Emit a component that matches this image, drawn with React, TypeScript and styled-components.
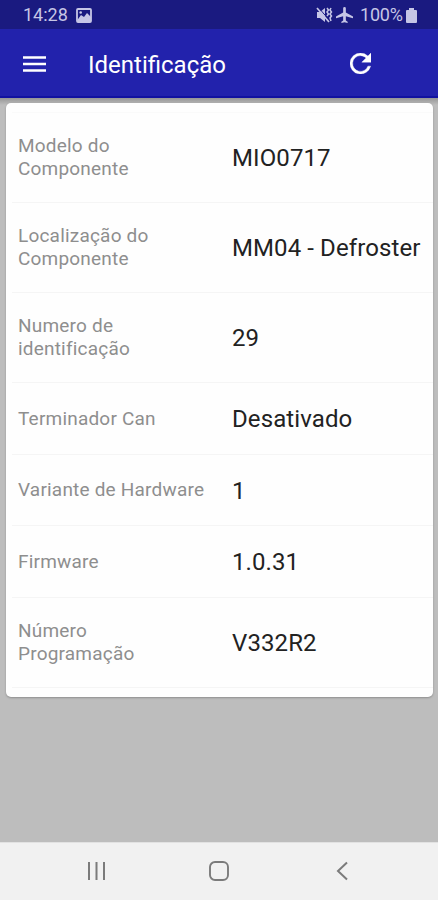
import React from 'react';
import styled, { createGlobalStyle } from 'styled-components';

const GlobalStyle = createGlobalStyle`
  * { box-sizing: border-box; }
  body { margin: 0; background: #bdbdbd; font-family: Roboto, sans-serif; }
`;

const Screen = styled.div`
  width: 100%;
  height: 900px;
  display: flex;
  flex-direction: column;
  overflow: hidden;
  background: #bdbdbd;
`;

const StatusBar = styled.header`
  height: 29px;
  flex: none;
  display: flex;
  align-items: center;
  justify-content: space-between;
  padding: 1px 21px 0 23px;
  background: #1a1a80;
  color: #c6c6e6;
  font-size: 18px;
  line-height: 20px;
`;

const StatusGroup = styled.div`
  display: flex;
  align-items: center;
`;

const Clock = styled.span`
  width: 53px;
`;

const MutedSlot = styled.span`
  display: flex;
  margin-right: 3px;
`;

const Percent = styled.span`
  width: 46px;
  margin-left: 7px;
  letter-spacing: -0.2px;
`;

const Toolbar = styled.div`
  height: 69px;
  flex: none;
  display: flex;
  align-items: center;
  padding: 2px 67px 0 23px;
  background: #2222ac;
  border-bottom: 2px solid #1212a0;
  color: #fff;
`;

const Title = styled.h1`
  flex: 1;
  margin: 2px 0 0 42px;
  font-size: 24px;
  font-weight: 400;
  line-height: 28px;
  letter-spacing: 0;
`;

const IconButton = styled.button`
  display: flex;
  padding: 0;
  border: 0;
  background: none;
  color: inherit;
`;

const Content = styled.main`
  flex: 1;
  padding: 5px 5px 0 6px;
  background: linear-gradient(#969696, #bdbdbd 7px);
`;

const Card = styled.section`
  height: 594px;
  padding: 9px 0 0 6px;
  border-radius: 5px;
  background: #fefefe;
  box-shadow: 0 1px 2px rgba(0, 0, 0, 0.25);
`;

const List = styled.dl`
  margin: 0;
  border-top: 1px solid #fafafa;
`;

const Row = styled.div<{ $height: number }>`
  height: ${({ $height }) => $height}px;
  display: grid;
  grid-template-columns: 214px 1fr;
  align-items: center;
  padding-left: 6px;
  border-bottom: 1px solid #f5f5f5;
`;

const Label = styled.dt`
  padding-bottom: 1px;
  color: #8e8e8e;
  font-size: 19px;
  line-height: 23px;
  white-space: pre-line;
  letter-spacing: 0.2px;
`;

const Value = styled.dd`
  margin: 0;
  padding-top: 1px;
  color: #222;
  font-size: 24px;
  line-height: 28px;
  letter-spacing: 0.1px;
  white-space: nowrap;
`;

const NavBar = styled.nav`
  height: 58px;
  flex: none;
  display: flex;
  align-items: center;
  justify-content: space-between;
  padding: 0 84px 2px 84px;
  background: #f1f1f1;
  border-top: 1px solid #e2e2e2;
  color: #7b7b7b;
`;

const rows = [
  { label: 'Modelo do\nComponente', value: 'MIO0717', height: 90 },
  { label: 'Localização do\nComponente', value: 'MM04 - Defroster', height: 90 },
  { label: 'Numero de\nidentificação', value: '29', height: 90 },
  { label: 'Terminador Can', value: 'Desativado', height: 72 },
  { label: 'Variante de Hardware', value: '1', height: 71 },
  { label: 'Firmware', value: '1.0.31', height: 72 },
  { label: 'Número\nProgramação', value: 'V332R2', height: 90 },
];

const PictureIcon = () => (
  <svg width="16" height="15" viewBox="0 0 16 15">
    <rect x="1" y="1" width="14" height="13" rx="1" fill="none" stroke="currentColor" strokeWidth="1.8" />
    <path d="M1 12.500 5 7l3 2 3-4 4 4v5H1Z" fill="currentColor" />
    <circle cx="4.700" cy="4.500" r="1.300" fill="currentColor" />
  </svg>
);

const MuteIcon = () => (
  <svg width="17" height="16" viewBox="0 0 17 16" fill="none" stroke="currentColor">
    <path d="M1 5h3l5-4v14l-5-4H1Z" fill="currentColor" stroke="none" />
    <path d="m2 0 12 14" stroke="#1a1a80" strokeWidth="1" />
    <path d="m1 1 12 14" strokeWidth="1.700" />
    <path d="m11 1 1.500 2L11 5l1.500 2L11 9M15 1l-1 2 1.500 2L14 7l1.500 2L14 11l1 3" strokeWidth="1.500" />
  </svg>
);

const PlaneIcon = () => (
  <svg width="17" height="16" viewBox="2 2 19 20" preserveAspectRatio="none">
    <path fill="currentColor" d="M21 16v-2l-8-5V3.500a1.500 1.500 0 0 0-3 0V9l-8 5v2l8-2.500V19l-2 1.500V22l3.500-1 3.500 1v-1.500L13 19v-5.500Z" />
  </svg>
);

const BatteryIcon = () => (
  <svg width="11" height="15" viewBox="0 0 11 15">
    <path fill="currentColor" d="M3 0h5v2h2a1 1 0 0 1 1 1v11a1 1 0 0 1-1 1H1a1 1 0 0 1-1-1V3a1 1 0 0 1 1-1h2Z" />
  </svg>
);

const MenuIcon = () => (
  <svg width="23" height="16" viewBox="0 0 23 16">
    <path d="M0 1.500h23M0 8h23M0 14.500h23" stroke="currentColor" strokeWidth="2.700" />
  </svg>
);

const RefreshIcon = () => (
  <svg width="21" height="21" viewBox="4 4 16 16">
    <path fill="currentColor" stroke="currentColor" strokeWidth=".3" d="M17.650 6.350A7.958 7.958 0 0 0 12 4a8 8 0 1 0 7.730 10h-2.080A6 6 0 1 1 12 6c1.660 0 3.140.690 4.220 1.780L13 11h7V4Z" />
  </svg>
);

const RecentsIcon = () => (
  <svg width="24" height="24" viewBox="0 0 24 24">
    <path d="M5 3v18M12.500 3v18M20 3v18" stroke="currentColor" strokeWidth="2" />
  </svg>
);

const HomeIcon = () => (
  <svg width="24" height="24" viewBox="0 0 24 24">
    <rect x="3" y="3" width="18" height="18" rx="5" fill="none" stroke="currentColor" strokeWidth="1.900" />
  </svg>
);

const BackIcon = () => (
  <svg width="24" height="24" viewBox="0 0 24 24">
    <path d="M17 3.500 8 12l9 8.500" fill="none" stroke="currentColor" strokeWidth="2" />
  </svg>
);

export default function App() {
  return (
    <>
      <GlobalStyle />
      <Screen>
        <StatusBar>
          <StatusGroup>
            <Clock>14:28</Clock>
            <PictureIcon />
          </StatusGroup>
          <StatusGroup>
            <MutedSlot><MuteIcon /></MutedSlot>
            <PlaneIcon />
            <Percent>100%</Percent>
            <BatteryIcon />
          </StatusGroup>
        </StatusBar>
        <Toolbar>
          <IconButton aria-label="Menu"><MenuIcon /></IconButton>
          <Title>Identificação</Title>
          <IconButton aria-label="Atualizar"><RefreshIcon /></IconButton>
        </Toolbar>
        <Content>
          <Card>
            <List>
              {rows.map(({ label, value, height }) => (
                <Row key={label} $height={height}>
                  <Label>{label}</Label>
                  <Value>{value}</Value>
                </Row>
              ))}
            </List>
          </Card>
        </Content>
        <NavBar>
          <IconButton aria-label="Recentes"><RecentsIcon /></IconButton>
          <IconButton aria-label="Início"><HomeIcon /></IconButton>
          <IconButton aria-label="Voltar"><BackIcon /></IconButton>
        </NavBar>
      </Screen>
    </>
  );
}
